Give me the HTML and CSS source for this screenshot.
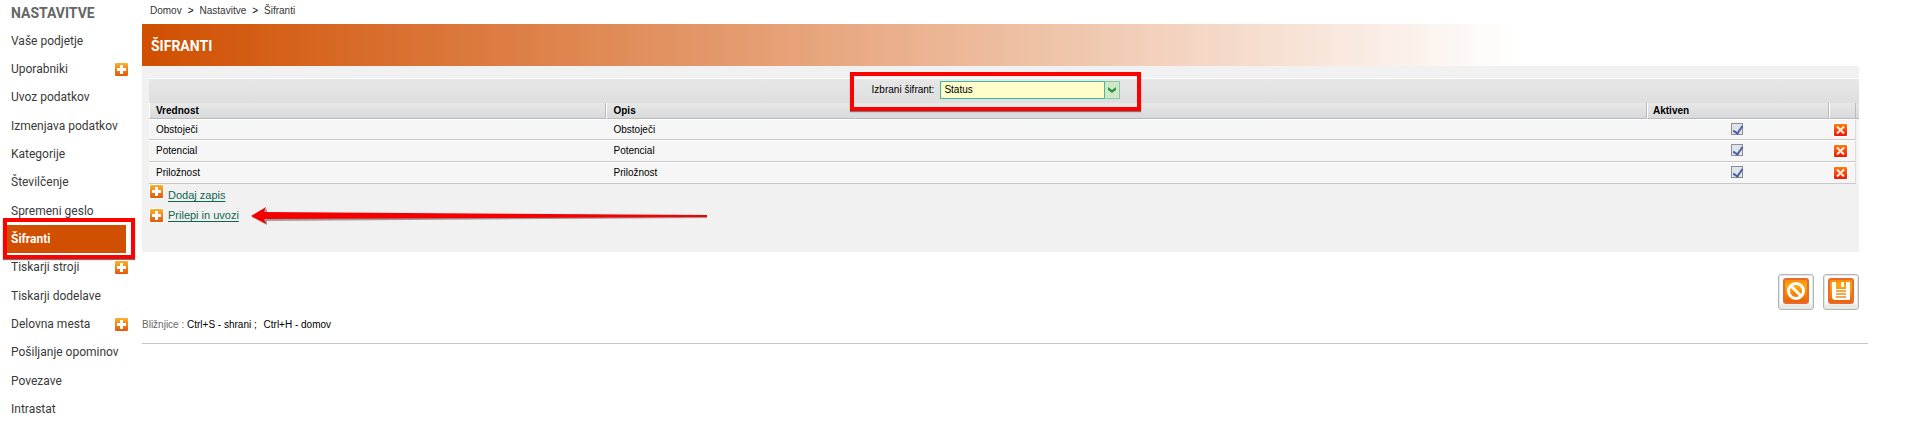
FILE: index.html
```html
<!DOCTYPE html>
<html lang="sl">
<head>
<meta charset="utf-8">
<title>Šifranti</title>
<link rel="stylesheet" href="styles.css">
</head>
<body>
<svg class="defs" aria-hidden="true">
  <defs>
    <linearGradient id="orange" x1="0" y1="0" x2="0" y2="1"><stop offset="0" stop-color="#fdb02c"/><stop offset="1" stop-color="#e4580c"/></linearGradient>
    <linearGradient id="red" x1="0" y1="0" x2="0" y2="1"><stop offset="0" stop-color="#ff7a0c"/><stop offset="1" stop-color="#ee1408"/></linearGradient>
    <linearGradient id="tile" x1="0" y1="0" x2="0" y2="1"><stop offset="0" stop-color="#f98c10"/><stop offset=".3" stop-color="#ffa808"/><stop offset="1" stop-color="#e85c04"/></linearGradient>
  </defs>
  <symbol id="plus" viewBox="0 0 13 13"><rect width="13" height="13" rx="1" fill="url(#orange)"/><path d="M5 2h3v3h3v3H8v3H5V8H2V5h3z" fill="#fff"/></symbol>
  <symbol id="cross" viewBox="0 0 13 12"><rect width="13" height="12" rx="1" fill="url(#red)"/><path d="M3 2.500l7 7M10 2.500l-7 7" stroke="#fff3e0" stroke-width="2"/></symbol>
</svg>
<div class="page">
  <nav class="sidebar">
    <h2 class="sidebar-title">NASTAVITVE</h2>
    <ul class="menu">
      <li><a href="#">Vaše podjetje</a></li>
      <li><a href="#">Uporabniki</a><svg class="plus"><use href="#plus"/></svg></li>
      <li><a href="#">Uvoz podatkov</a></li>
      <li><a href="#">Izmenjava podatkov</a></li>
      <li><a href="#">Kategorije</a></li>
      <li><a href="#">Številčenje</a></li>
      <li><a href="#">Spremeni geslo</a></li>
      <li class="selected"><a href="#">Šifranti</a><span class="mark mark-menu"></span></li>
      <li><a href="#">Tiskarji stroji</a><svg class="plus"><use href="#plus"/></svg></li>
      <li><a href="#">Tiskarji dodelave</a></li>
      <li><a href="#">Delovna mesta</a><svg class="plus"><use href="#plus"/></svg></li>
      <li><a href="#">Pošiljanje opominov</a></li>
      <li><a href="#">Povezave</a></li>
      <li><a href="#">Intrastat</a></li>
    </ul>
  </nav>
  <main class="main">
    <div class="crumbs"><a href="#">Domov</a><span>&gt;</span><a href="#">Nastavitve</a><span>&gt;</span><a href="#">Šifranti</a></div>
    <div class="content">
      <h1 class="banner">ŠIFRANTI</h1>
      <section class="panel">
        <div class="toolbar">
          <div class="picker">
            <label for="list">Izbrani šifrant:</label>
            <span class="combo">
              <select id="list"><option>Status</option></select>
              <svg class="combo-arrow" viewBox="0 0 14 16"><path d="M3 5l4 3 4-3v3l-4 3-4-3z" fill="#2f9142"/></svg>
            </span>
            <span class="mark mark-picker"></span>
          </div>
        </div>
        <div class="table-wrap">
          <table class="grid">
            <colgroup><col class="c-value"><col class="c-desc"><col class="c-active"><col class="c-del"></colgroup>
            <thead><tr><th>Vrednost</th><th>Opis</th><th>Aktiven</th><th></th></tr></thead>
            <tbody>
              <tr><td>Obstoječi</td><td>Obstoječi</td><td class="mid"><input type="checkbox" checked aria-label="Aktiven: Obstoječi"></td><td class="mid"><button class="del" aria-label="Izbriši"><svg><use href="#cross"/></svg></button></td></tr>
              <tr><td>Potencial</td><td>Potencial</td><td class="mid"><input type="checkbox" checked aria-label="Aktiven: Potencial"></td><td class="mid"><button class="del" aria-label="Izbriši"><svg><use href="#cross"/></svg></button></td></tr>
              <tr><td>Priložnost</td><td>Priložnost</td><td class="mid"><input type="checkbox" checked aria-label="Aktiven: Priložnost"></td><td class="mid"><button class="del" aria-label="Izbriši"><svg><use href="#cross"/></svg></button></td></tr>
            </tbody>
          </table>
        </div>
        <div class="actions">
          <div class="action action-add"><svg class="plus"><use href="#plus"/></svg><a href="#">Dodaj zapis</a></div>
          <div class="action"><svg class="plus"><use href="#plus"/></svg><a href="#">Prilepi in uvozi</a>
            <svg class="arrow" viewBox="0 0 458 20"><path d="M2 11L17 3v5L457 11v1L17 15v4z" fill="#777" opacity=".7"/><path d="M1 10L16 1L14 6L457 9v2L14 13L16 18z" fill="#f40000"/></svg>
          </div>
        </div>
      </section>
      <div class="buttons">
        <button class="tool" aria-label="Prekliči"><svg viewBox="0 0 26 26"><rect x="1" y="1" width="24" height="24" rx="2" fill="url(#tile)" stroke="#ea6a30" stroke-width="2"/><circle cx="13" cy="13" r="7.500" fill="none" stroke="#fff" stroke-width="3"/><path d="M8 8l10 10" stroke="#fff" stroke-width="3"/></svg></button>
        <button class="tool" aria-label="Shrani"><svg viewBox="0 0 26 26"><rect x="1" y="1" width="24" height="24" rx="2" fill="url(#tile)" stroke="#ea6a30" stroke-width="2"/><path d="M4 4h4v7h10V4h4v18H6l-2-2z" fill="#fff"/><path d="M13 4h3v5h-3z" fill="#fff"/><path d="M8 13h10M8 16h10M8 19h10" stroke="#f08a1c" stroke-width="1.500"/></svg></button>
      </div>
    </div>
    <footer class="shortcuts"><span class="muted">Bližnjice :</span> Ctrl+S - shrani ; <span class="second">Ctrl+H - domov</span></footer>
  </main>
</div>
</body>
</html>
```
FILE: styles.css
```css
* { box-sizing: border-box; }
body { margin: 0; background: #fff; color: #000; font: 10px/12px "Liberation Sans", Arial, sans-serif; }
.defs { position: absolute; width: 0; height: 0; }
.page { display: flex; }
.sidebar { flex: 0 0 142px; font-family: Roboto, sans-serif; }
.sidebar-title { margin: 0; padding: 5px 0 5px 11px; font-size: 14px; line-height: 16px; font-weight: 700; color: #666; }
.menu { list-style: none; margin: 0; padding: 0; }
.menu li { position: relative; display: flex; align-items: center; justify-content: space-between; height: 28px; margin: 0 14px 0 7px; padding-left: 4px; font-size: 12px; line-height: 16px; }
.menu li:nth-child(3n+1) { height: 29px; }
.menu a { color: #3a3a3a; text-decoration: none; }
.menu .selected { margin-right: 16px; background: #d04f00; }
.menu .selected a { color: #fff; font-weight: 700; }
.plus { flex: none; width: 13px; height: 13px; outline: 1px solid #fff; }
.mark { position: absolute; border: 4px solid #f00; box-shadow: 0 1px 1px #777; pointer-events: none; }
.mark-menu { inset: -7px -9px -6px -4px; }

.main { flex: 1; min-width: 0; margin-right: 54px; }
.crumbs { display: flex; gap: 6px; height: 24px; padding: 5px 8px; }
.crumbs a { color: #333; text-decoration: none; }
.content { margin-right: 9px; }
.banner { margin: 0; padding: 13px 9px 11px; background: linear-gradient(90deg, #d04f00, #fff 80%); color: #fff; font: 700 14px/18px Roboto, sans-serif; }
.panel { padding: 12px 0 29px 7px; background: #f1f1f1; }
.toolbar { display: flex; justify-content: center; height: 25px; border-top: 1px solid #fff; background: linear-gradient(#e7e7e7, #dedede); }
.picker { position: relative; display: flex; align-items: center; gap: 6px; margin-right: 16px; padding-bottom: 2px; }
.combo { position: relative; display: block; width: 180px; height: 18px; }
.combo select { display: block; width: 100%; height: 100%; appearance: none; border: 1px solid #3fb89b; border-radius: 0; background: #ffc; padding: 0 3px; font: 10px/14px "Liberation Sans", Arial, sans-serif; color: #000; }
.combo-arrow { position: absolute; top: 0; right: 0; width: 16px; height: 18px; border: 1px solid #8cc9a0; border-left-color: #3fb89b; background: #cfe8c6; pointer-events: none; }
.mark-picker { inset: -7px -21px -8px -22px; z-index: 1; }
.table-wrap { padding-right: 3px; background: linear-gradient(#e6e6e6, #d8d9db 15px, #bbb 15px, #bbb 16px, #f5f5f5 16px); }
.grid { width: 100%; border-collapse: separate; border-spacing: 0; table-layout: fixed; }
.c-value { width: 26.8%; }
.c-active { width: 182px; }
.c-del { width: 27px; }
.grid th { height: 16px; padding: 0 6px; text-align: left; font-size: 10px; line-height: 15px; background: linear-gradient(#e8e8e8, #d8d9db); border-right: 1px solid #bbb; border-bottom: 1px solid #bbb; border-left: 1px solid #fff; }
.grid th:nth-child(3) { padding-left: 5px; }
.grid td { height: 22px; padding: 0 7px; line-height: 12px; background: #f6f6f6; border-top: 1px solid #fff; border-bottom: 1px solid #c8c8c8; }
.grid tr:first-child td { height: 21px; }
.grid td:last-child { border-right: 1px solid #ddd; }
.grid td.mid { padding: 0 3px 0 0; text-align: center; }
.grid input { appearance: none; display: block; width: 12px; height: 12px; margin: 0 auto 2px; border: 1px solid #8e8f8f; background: #dfe3ea; }
.grid input:checked::before { content: ""; display: block; width: 4px; height: 8px; margin: 0 3px; border: solid #4a5fa5; border-width: 0 2px 2px 0; transform: rotate(35deg); }
.del { display: block; margin: 0 auto; padding: 0; border: 0; background: none; line-height: 0; }
.del svg { width: 13px; height: 12px; outline: 1px solid #fff; }
.actions { display: flex; flex-direction: column; gap: 6px; padding: 1px 0 0 1px; font-size: 11px; }
.action { position: relative; display: flex; align-items: center; gap: 5px; height: 16px; }
.action-add { align-items: flex-start; }
.action-add a { align-self: flex-end; }
.action a { color: #0f6650; text-underline-offset: 2px; }
.arrow { position: absolute; left: 100px; top: -1px; width: 458px; height: 20px; }
.buttons { display: flex; justify-content: flex-end; gap: 9px; padding-top: 22px; }
.tool { display: flex; align-items: flex-start; justify-content: center; width: 36px; height: 36px; padding: 3px 0; border: 1px solid #b4b6b6; border-radius: 3px; background: linear-gradient(#fff, #fff 28px, #e8eae6 30px); box-shadow: inset 0 0 0 1px #e4e6e4; }
.tool svg { flex: none; width: 26px; height: 26px; }
.shortcuts { padding: 9px 0 12px; border-bottom: 1px solid #c8c8c8; }
.muted { color: #666; }
.second { margin-left: 4px; }
```
